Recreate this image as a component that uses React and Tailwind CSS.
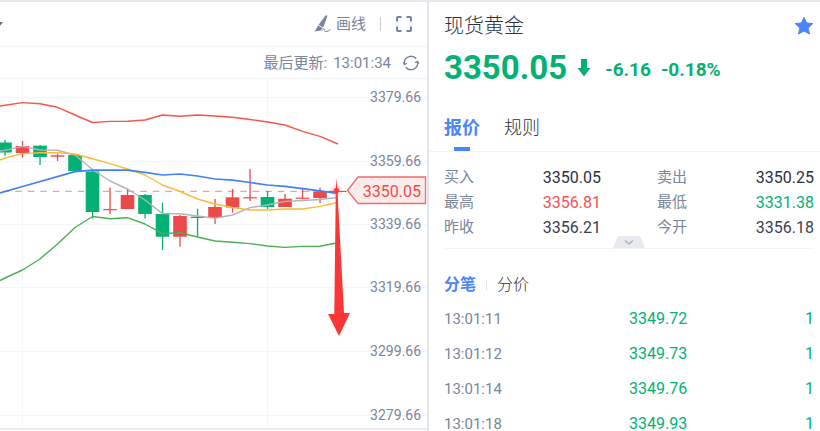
import React from 'react'

const AXIS = [
  { y: 97, label: '3379.66' },
  { y: 161, label: '3359.66' },
  { y: 224, label: '3339.66' },
  { y: 287, label: '3319.66' },
  { y: 351, label: '3299.66' },
  { y: 415, label: '3279.66' },
]

const UP = '#ec4a4a'
const DOWN = '#03b174'

// [center x, wick top, wick bottom, body top, body bottom, color]
const CANDLES = [
  [5, 140, 156, 142.5, 152.5, DOWN],
  [22.5, 141, 157.5, 146, 153, UP],
  [40, 145, 165, 145.7, 157, DOWN],
  [57.5, 153.5, 161, 155.3, 156.7, UP],
  [75, 154.5, 171, 155, 171, DOWN],
  [92.5, 171, 218.5, 171.5, 212, DOWN],
  [110, 187.5, 214, 209, 210.2, UP],
  [127.5, 189, 209, 195, 209, UP],
  [145, 194, 218.5, 195, 214, DOWN],
  [162.5, 202.7, 250, 214, 236.7, DOWN],
  [180, 215, 246.7, 216, 236.7, UP],
  [197.5, 208.7, 236.7, 216.6, 218, DOWN],
  [215, 199, 224, 207, 218, UP],
  [232.5, 189, 212.7, 197.3, 207.5, UP],
  [250, 169, 201, 197.2, 198.4, UP],
  [267.5, 191, 209, 197, 207, DOWN],
  [285, 194, 207, 198.7, 207, UP],
  [302.5, 187.7, 199.3, 197.6, 198.8, UP],
  [320, 187.7, 203, 191.5, 198, UP],
]

const LINES = [
  {
    color: '#f4574b',
    points:
      '0,106 5,105.3 22.5,102.6 40,103.7 57.5,107.3 75,115 92.5,122.5 110,121.4 127.5,121.3 145,120 162.5,115 180,116.2 197.5,115 215,116 232.5,117.3 250,119.5 267.5,122 285,125 302.5,131.3 320,136.3 338,144',
  },
  {
    color: '#4caf50',
    points:
      '0,280.5 5,278 22.5,270 40,259 57.5,244 75,227.5 92.5,216.5 110,218.7 127.5,217.7 145,224 162.5,233.6 180,232.7 197.5,237 215,241 232.5,242.3 250,243.6 267.5,246 285,247.4 302.5,246.4 320,246.3 337.5,242.7',
  },
  {
    color: '#b5b5b5',
    points:
      '0,151 5,150.4 22.5,146.4 40,150 57.5,150.2 75,155 92.5,169.5 110,181 127.5,189 145,200 162.5,213.6 180,213.8 197.5,216 215,218.3 232.5,215 250,207.6 267.5,205 285,201.4 302.5,200.5 320,199.5 337.5,197.5',
  },
  {
    color: '#fbbb38',
    points:
      '0,160 5,158 22.5,153.6 40,152.7 57.5,152.7 75,154 92.5,158.7 110,163.6 127.5,169 145,175 162.5,185 180,191.5 197.5,199 215,204 232.5,207.5 250,210 267.5,210 285,209 302.5,209 320,206.4 337.5,202.5',
  },
  {
    color: '#3f82f2',
    width: 1.7,
    points:
      '0,193 22.5,186.5 75,171.6 92.5,170.2 127.5,170.2 145,172.3 162.5,175 180,174 197.5,176 215,179 232.5,180.2 250,182.5 267.5,185 285,186.3 302.5,188.7 320,190.8 337.5,193.3',
  },
]

const QUOTES = [
  { label: '买入', value: '3350.05', tone: 'text-[#2c3040]' },
  { label: '卖出', value: '3350.25', tone: 'text-[#2c3040]' },
  { label: '最高', value: '3356.81', tone: 'text-[#f45353]' },
  { label: '最低', value: '3331.38', tone: 'text-[#03b174]' },
  { label: '昨收', value: '3356.21', tone: 'text-[#3a3f4d]' },
  { label: '今开', value: '3356.18', tone: 'text-[#3a3f4d]' },
]

const TRADES = [
  { time: '13:01:11', price: '3349.72', count: 1 },
  { time: '13:01:12', price: '3349.73', count: 1 },
  { time: '13:01:14', price: '3349.76', count: 1 },
  { time: '13:01:18', price: '3349.93', count: 1 },
]

function BrushIcon() {
  return (
    <svg width="18" height="18" viewBox="0 0 18 18" aria-hidden="true">
      <path d="M11.6 0.6 Q13 -0.2 13.4 1 L9.2 12.6 L4.6 9.8 Z" fill="#75839c" />
      <path d="M4.2 10.4 L8.6 13.1 C7.6 15.8 5 16.4 0.4 16.2 C2.8 14.6 2.4 12 4.2 10.4 Z" fill="#75839c" />
      <path d="M7.6 15.8 C9.6 13.4 11.2 13.4 10.6 15.2 C10.4 17.4 13 17 16.4 14.6" fill="none" stroke="#75839c" />
    </svg>
  )
}

function FullscreenIcon() {
  return (
    <svg width="16" height="16" viewBox="0 0 16 16" fill="none" stroke="#75839c" strokeWidth="2" aria-hidden="true">
      <path d="M1 5.5V2Q1 1 2 1H5.5M10.5 1H14Q15 1 15 2V5.5M15 10.5V14Q15 15 14 15H10.5M5.5 15H2Q1 15 1 14V10.5" />
    </svg>
  )
}

function RefreshIcon() {
  return (
    <svg width="16" height="16" viewBox="0 0 16 16" fill="none" stroke="#75839c" strokeWidth="1.4" aria-hidden="true">
      <path d="M1.4 9 A6.7 6.7 0 0 1 13.2 3.8" />
      <path d="M14.6 7 A6.7 6.7 0 0 1 2.8 12.2" />
      <path d="M0 7.2 L1.4 9.6 L4 8.2M16 8.8 L14.6 6.4 L12 7.8" strokeWidth="1.2" />
    </svg>
  )
}

function Chart() {
  return (
    <svg
      className="block w-full min-h-0 flex-1"
      viewBox="0 79 427 349"
      role="img"
      aria-label="现货黄金 K线图"
    >
      <g stroke="#f4f5f7">
        {AXIS.map((a) => (
          <line key={a.label} x1="0" x2="427" y1={a.y + 0.5} y2={a.y + 0.5} />
        ))}
        <line x1="22.5" x2="22.5" y1="79" y2="428" />
        <line x1="267.5" x2="267.5" y1="79" y2="428" />
      </g>
      <g fontSize="14" fill="#79859b" textAnchor="end">
        {AXIS.map((a) => (
          <text key={a.label} x="421" y={a.y + 5}>
            {a.label}
          </text>
        ))}
      </g>
      <line x1="2.8" x2="348" y1="191.3" y2="191.3" stroke="#f59c9c" strokeWidth="1.2" strokeDasharray="6.5 6" />
      {CANDLES.map(([x, high, low, top, bottom, color]) => (
        <g key={x} fill={color}>
          <rect x={x - 0.6} y={high} width="1.3" height={low - high} />
          <rect x={x - 6.8} y={top} width="13.6" height={bottom - top} />
        </g>
      ))}
      {LINES.map((l) => (
        <polyline
          key={l.color}
          points={l.points}
          fill="none"
          stroke={l.color}
          strokeWidth={l.width || 1.4}
          strokeLinejoin="round"
        />
      ))}
      <circle cx="336.5" cy="190.5" r="6" fill="#ec4a4a" opacity="0.15" />
      <circle cx="336.5" cy="190.5" r="2.8" fill="#ec4a4a" />
      <path d="M329 191.5H346" stroke="#ec4a4a" />
      <path d="M347.5 190.5 L358 177 H425.5 V203.5 H358 Z" fill="#fcebeb" stroke="#f26b6b" strokeWidth="1.3" />
      <text x="421" y="197" fontSize="16" fill="#ee4b4b" textAnchor="end">
        3350.05
      </text>
      <path d="M336.5 178 L337.4 190 L344 313 H350 L339 336 L328 314 H334.3 L335.8 190 Z" fill="#fc3636" />
    </svg>
  )
}

function ChartPanel() {
  return (
    <section className="flex min-w-0 flex-col border-r-2 border-[#e2e5ee] text-[#79859b]">
      <header className="flex h-[45px] shrink-0 items-center border-b border-[#f3f4f6] pr-[15px]">
        <svg width="3" height="5" viewBox="5 0 3 5" aria-hidden="true">
          <path d="M0 0H8L4 5Z" fill="#5f6b84" />
        </svg>
        <button type="button" className="ml-auto flex items-center gap-1 text-[15px] leading-6">
          <BrushIcon />
          画线
        </button>
        <span className="ml-[14px] mr-[15px] h-[14px] w-px bg-[#c9ced8]" />
        <button type="button" aria-label="全屏">
          <FullscreenIcon />
        </button>
      </header>
      <div className="flex h-8 shrink-0 items-center justify-end border-b border-[#f3f4f6] pr-2 text-[15px] leading-6">
        <span>最后更新:</span>
        <time className="ml-[6px] mr-3">13:01:34</time>
        <button type="button" aria-label="刷新">
          <RefreshIcon />
        </button>
      </div>
      <Chart />
      <div className="mb-px h-0.5 shrink-0 bg-[#e8ebf1]" />
    </section>
  )
}

function QuotePanel() {
  return (
    <section className="min-w-0 text-[#2c3040]">
      <div className="flex items-center justify-between pl-[15px] pr-[6px] pt-2">
        <h1 className="text-[20px] font-light leading-8">现货黄金</h1>
        <button type="button" aria-label="自选">
          <svg width="20" height="20" viewBox="0 0 20 20" aria-hidden="true">
            <path
              d="M10 1.2 L12.6 6.9 L18.8 7.6 L14.2 11.9 L15.5 18 L10 15 L4.5 18 L5.8 11.9 L1.2 7.6 L7.4 6.9 Z"
              fill="#4c84f7"
              stroke="#4c84f7"
              strokeWidth="1"
              strokeLinejoin="round"
            />
          </svg>
        </button>
      </div>
      <div className="flex h-[52px] items-center pl-[15px] font-bold text-[#03b174]">
        <span className="text-[33px] leading-10">3350.05</span>
        <svg className="ml-[10px]" width="14" height="18" viewBox="0 0 14 18" aria-hidden="true">
          <path d="M4 0H10V9H13.5L7 17.5L0.5 9H4Z" fill="#03b174" />
        </svg>
        <span className="ml-[14px] mt-1 text-[19px] leading-6">-6.16</span>
        <span className="ml-[10px] mt-1 text-[19px] leading-6">-0.18%</span>
      </div>
      <nav className="mt-5 flex gap-6 border-b border-[#f3f4f6] pl-[15px] text-[18px] leading-7">
        <button type="button" className="flex flex-col items-center font-bold text-[#4c84f7]">
          报价
          <span className="mt-[5px] h-1 w-4 bg-[#4c84f7]" />
        </button>
        <button type="button" className="self-start font-light">
          规则
        </button>
      </nav>
      <div className="ml-[15px] mr-[6px] border-b border-[#f3f4f6] pt-[13px]">
        <dl className="grid grid-cols-2 gap-x-14 leading-[25px]">
          {QUOTES.map((q) => (
            <div key={q.label} className="flex justify-between">
              <dt className="text-[15px] text-[#79859b]">{q.label}</dt>
              <dd className={`text-[16px] ${q.tone}`}>{q.value}</dd>
            </div>
          ))}
        </dl>
        <button type="button" aria-label="展开" className="mx-auto -mt-1 block">
          <svg width="32" height="12" viewBox="0 0 32 12" fill="none" aria-hidden="true">
            <path d="M0 12 L4 2 Q5 0 7 0 H25 Q27 0 28 2 L32 12 Z" fill="#e8eaef" />
            <path d="M12 4.5 L16 8 L20 4.5" stroke="#abb2c0" strokeWidth="1.6" />
          </svg>
        </button>
      </div>
      <div className="flex items-center pl-[15px] pt-6 text-[16px] leading-6">
        <button type="button" className="font-bold text-[#4c84f7]">
          分笔
        </button>
        <span className="mx-[10px] h-[10px] w-px bg-[#dfe2e8]" />
        <button type="button" className="font-light">分价</button>
      </div>
      <table className="ml-[15px] mt-1 w-[calc(100%-21px)] table-fixed">
        <tbody>
          {TRADES.map((t) => (
            <tr key={t.time} className="h-[35px] text-[16px] leading-[14px]">
              <td className="w-1/2 text-[15px] text-[#79859b]">{t.time}</td>
              <td className="text-[#03b174]">{t.price}</td>
              <td className="text-right text-[#03b174]">{t.count}</td>
            </tr>
          ))}
        </tbody>
      </table>
    </section>
  )
}

export default function App() {
  return (
    <main className="grid h-screen grid-cols-[429fr_391fr] grid-rows-[minmax(0,1fr)] overflow-hidden border-t-2 border-[#e5e8ec] bg-white font-[Roboto,'Noto_Sans_CJK_SC',sans-serif]">
      <ChartPanel />
      <QuotePanel />
    </main>
  )
}
